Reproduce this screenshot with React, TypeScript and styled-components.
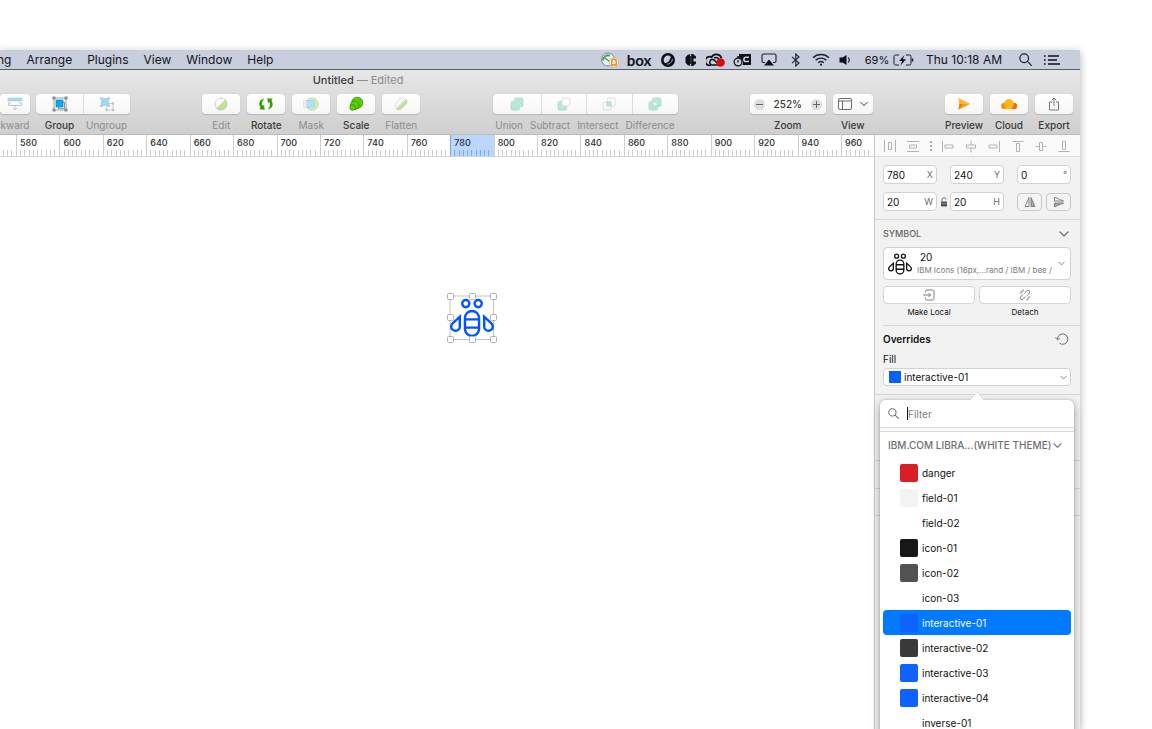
import React from 'react';
import styled, { createGlobalStyle } from 'styled-components';

const GlobalStyle = createGlobalStyle`
  *, *::before, *::after { box-sizing: border-box; }
  body {
    margin: 0;
    background: #fff;
    color: #111;
    font-family: Inter, "Liberation Sans", sans-serif;
    font-size: 10px;
    line-height: 14px;
    overflow: hidden;
  }
  button, input, select { font: inherit; color: inherit; margin: 0; }
  svg { display: block; flex: none; }
`;

const Page = styled.div`
  height: 100vh;
  padding: 50px 72px 0 0;
  overflow: hidden;
`;

const Screen = styled.main`
  display: flex;
  flex-direction: column;
  height: 100%;
  background: #fff;
  box-shadow: 0 2px 8px rgba(0, 0, 0, 0.3);
`;

/* ---------- Menu bar ---------- */

const MenuBar = styled.header`
  display: flex;
  flex: none;
  justify-content: space-between;
  align-items: center;
  height: 20px;
  padding-right: 20px;
  background: #c8cedb;
  border-bottom: 1px solid #566070;
  font-size: 12px;
  color: #10141c;
`;

const Menus = styled.nav`
  display: flex;
  gap: 15px;
  margin-left: -3px;
`;

const MenuLink = styled.a`
  color: inherit;
  text-decoration: none;
`;

const StatusItems = styled.div`
  display: flex;
  align-items: center;
  gap: 4px;
`;

const Status = styled.span<{ $width?: number; $before?: number }>`
  display: flex;
  justify-content: center;
  align-items: center;
  width: ${(p) => (p.$width ? `${p.$width}px` : 'auto')};
  margin-left: ${(p) => p.$before ?? 0}px;
  white-space: nowrap;
`;

const BoxLogo = styled.span`
  font-family: Lato, sans-serif;
  font-size: 15px;
  font-weight: 700;
`;

const Percent = styled.span`
  font-size: 11px;
`;

/* ---------- Window toolbar ---------- */

const WindowHeader = styled.div`
  flex: none;
  background: linear-gradient(#e7e7e7, #cfcfcf);
  border-bottom: 1px solid #bcbcbc;
`;

const Title = styled.h1`
  margin: 0;
  padding: 2px 364px 0 0;
  font-size: 11px;
  font-weight: 500;
  line-height: 16px;
  text-align: center;
  color: #3c3c3c;

  span { font-weight: 400; color: #8c8c8c; }
`;

const Toolbar = styled.div`
  display: flex;
  justify-content: space-between;
  height: 46px;
  padding: 6px 7px 0 0;
`;

const Cluster = styled.div<{ $gap?: number }>`
  display: flex;
  gap: ${(p) => p.$gap ?? 7}px;
`;

const ToolGroup = styled.div`
  display: flex;
  flex-direction: column;
  align-items: center;
  gap: 4px;
`;

const Segments = styled.div`
  display: flex;
  height: 20px;
  background: linear-gradient(#fff, #f6f6f6);
  border-radius: 4px;
  box-shadow: 0 0 1px rgba(0, 0, 0, 0.2), 0 1px 1px rgba(0, 0, 0, 0.14);
`;

const Segment = styled.button<{ $width: number; $dim?: boolean }>`
  display: flex;
  justify-content: center;
  align-items: center;
  gap: 8px;
  width: ${(p) => p.$width}px;
  padding: 0;
  border: 0;
  background: none;

  & + & { border-left: 1px solid #dcdcdc; }
  svg { opacity: ${(p) => (p.$dim ? 0.4 : 1)}; }
`;

const Labels = styled.div<{ $gap: number }>`
  display: flex;
  justify-content: center;
  gap: ${(p) => p.$gap}px;
  width: 0;
  white-space: nowrap;
`;

const Caption = styled.span<{ $dim?: boolean; $width?: number }>`
  flex: none;
  width: ${(p) => (p.$width ? `${p.$width}px` : 'auto')};
  text-align: center;
  font-weight: ${(p) => (p.$dim ? 400 : 500)};
  color: ${(p) => (p.$dim ? '#8c8c8c' : '#3a3a3a')};
`;

const ZoomStepper = styled(Segments)`
  justify-content: space-between;
  align-items: center;
  width: 76px;
  padding: 0 4px;
`;

const Round = styled.button`
  display: grid;
  place-items: center;
  width: 11px;
  height: 11px;
  padding: 0;
  border: 0;
  border-radius: 50%;
  background: #dedede;
`;

/* ---------- Document ---------- */

const Workspace = styled.div`
  display: flex;
  flex: 1;
  min-height: 0;
`;

const Document = styled.section`
  display: flex;
  flex: 1;
  flex-direction: column;
  min-width: 0;
`;

const Ruler = styled.div`
  display: grid;
  grid-template-columns: 16px repeat(19, 1fr) 33px;
  height: 22px;
  overflow: hidden;
  border-bottom: 1px solid #d4d4d4;
`;

const RulerCell = styled.div<{ $active?: boolean; $first?: boolean }>`
  display: flex;
  flex-direction: column;
  justify-content: space-between;
  min-width: 0;
  overflow: hidden;
  border-left: ${(p) => (p.$first ? '0' : `1px solid ${p.$active ? '#6ea6f5' : '#cfcfcf'}`)};
  background: ${(p) => (p.$active ? '#bcd7ff' : 'transparent')};
  color: #2e2e2e;
  font-size: 9px;
  --tick: ${(p) => (p.$active ? '#78aef8' : '#cdcdcd')};

  span { padding: 1px 0 0 3px; line-height: 14px; font-weight: 500; }
`;

const Ticks = styled.div<{ $count: number }>`
  display: grid;
  grid-template-columns: repeat(${(p) => p.$count}, 1fr);
  height: 6px;

  i { border-right: 1px solid var(--tick); }
  i:last-child { border-right: 0; }
`;

const Canvas = styled.div`
  position: relative;
  flex: 1;
`;

const Artwork = styled.svg`
  position: absolute;
  left: 446px;
  top: 135px;
`;

/* ---------- Inspector ---------- */

const Inspector = styled.aside`
  position: relative;
  flex: 0 0 206px;
  border-left: 1px solid #c8c8c8;
  background: #f2f2f2;
`;

const AlignBar = styled.div`
  display: flex;
  justify-content: space-between;
  align-items: center;
  height: 22px;
  padding: 0 9px 0 8px;
  background: #fafafa;
  border-bottom: 1px solid #dadada;
`;

const IconButton = styled.button`
  display: flex;
  padding: 0;
  border: 0;
  background: none;
`;

const Section = styled.section<{ $height?: number }>`
  height: ${(p) => (p.$height ? `${p.$height}px` : 'auto')};
  padding: 0 9px 0 8px;
  border-bottom: 1px solid #d6d6d6;
`;

const Geometry = styled(Section)`
  display: grid;
  grid-template-columns: 1fr 13px 1fr 13px 1fr;
  row-gap: 8px;
  padding-top: 8px;
  padding-bottom: 8px;
  align-items: center;
  justify-items: stretch;

  > svg { justify-self: center; }
`;

const Field = styled.label<{ $column?: number }>`
  display: flex;
  align-items: center;
  grid-column: ${(p) => p.$column};
  height: 19px;
  padding: 0 3px;
  border: 1px solid #d2d2d2;
  border-radius: 4px;
  background: #fff;
  font-size: 9px;
  color: #6c6c6c;

  input {
    flex: 1;
    width: 0;
    min-width: 0;
    padding: 0;
    border: 0;
    outline: 0;
    background: none;
    font-size: 10px;
    color: #111;
  }
`;

const FlipPair = styled.div`
  display: grid;
  grid-template-columns: 1fr 1fr;
  gap: 4px;
`;

const FlipButton = styled.button`
  display: grid;
  place-items: center;
  height: 18px;
  padding: 0;
  border: 1px solid #c9c9c9;
  border-radius: 4px;
  background: #f4f4f4;
`;

const SectionHead = styled.div<{ $height: number }>`
  display: flex;
  justify-content: space-between;
  align-items: center;
  height: ${(p) => p.$height}px;
  padding-right: 2px;
`;

const Heading = styled.h2<{ $caps?: boolean }>`
  margin: 0;
  font-size: ${(p) => (p.$caps ? 9 : 10)}px;
  font-weight: ${(p) => (p.$caps ? 500 : 600)};
  color: ${(p) => (p.$caps ? '#666' : '#111')};
`;

const SymbolPicker = styled.button`
  display: flex;
  align-items: center;
  width: 100%;
  height: 33px;
  padding: 0 5px 0 4px;
  border: 1px solid #d2d2d2;
  border-radius: 4px;
  background: #fff;
  text-align: left;
`;

const SymbolText = styled.span`
  display: grid;
  flex: 1;
  padding-left: 5px;
  line-height: 13px;
  white-space: nowrap;

  strong { padding-left: 3px; font-weight: 400; }
  small { font-size: 8px; line-height: 12px; color: #7a7a7a; }
`;

const SymbolActions = styled.div`
  display: grid;
  grid-template-columns: 1fr 1fr;
  gap: 4px;
  padding: 6px 0 6px;
`;

const Action = styled.label`
  display: grid;
  gap: 1px;
  font-size: 8px;
  text-align: center;
`;

const ActionButton = styled.button`
  display: grid;
  place-items: center;
  height: 18px;
  padding: 0;
  border: 1px solid #d4d4d4;
  border-radius: 4px;
  background: #fff;
`;

const Rule = styled.hr`
  height: 1px;
  margin: 0 -9px 0 0;
  border: 0;
  background: #d6d6d6;
`;

const FillLabel = styled.label`
  display: block;
  padding-bottom: 2px;
`;

const SelectBox = styled.div`
  display: flex;
  align-items: center;
  gap: 3px;
  height: 18px;
  padding: 0 3px 0 5px;
  border: 1px solid #d2d2d2;
  border-radius: 4px;
  background: #fff;

  select {
    flex: 1;
    appearance: none;
    padding: 0;
    border: 0;
    outline: 0;
    background: none;
  }
`;

const FillDot = styled.span`
  width: 12px;
  height: 12px;
  background: #0560ff;
`;

/* ---------- Style picker popover ---------- */

const Popover = styled.div`
  position: absolute;
  top: 265px;
  left: 5px;
  right: 6px;
  bottom: -10px;
  border-radius: 5px 5px 0 0;
  background: #fff;
  box-shadow: 0 0 1px rgba(0, 0, 0, 0.5), 0 3px 10px rgba(0, 0, 0, 0.35);
`;

const Arrow = styled.svg`
  position: absolute;
  top: -9px;
  left: 50%;
  margin-left: -10px;
`;

const Filter = styled.label`
  display: flex;
  align-items: center;
  gap: 8px;
  height: 27px;
  padding: 0 8px;

  input {
    flex: 1;
    width: 0;
    height: 13px;
    padding: 0;
    border: 0;
    border-left: 1px solid #111;
    outline: 0;
    background: none;
  }
  input::placeholder { color: #7d7d7d; opacity: 1; }
`;

const DoubleRule = styled.div`
  height: 5px;
  border: solid #dadada;
  border-width: 1px 0;
  background: #fafafa;
`;

const LibraryHead = styled.button`
  display: flex;
  align-items: center;
  gap: 2px;
  width: 100%;
  height: 26px;
  padding: 0 8px;
  border: 0;
  background: none;
  font-size: 10px;
  font-weight: 500;
  color: #6f6f6f;
  white-space: nowrap;
`;

const Options = styled.div`
  display: grid;
  padding: 2px 3px 0;
`;

const Option = styled.button<{ $selected?: boolean }>`
  display: flex;
  align-items: center;
  gap: 4px;
  height: 25px;
  padding: 0 17px;
  border: 0;
  border-radius: 4px;
  background: ${(p) => (p.$selected ? '#007aff' : 'transparent')};
  color: ${(p) => (p.$selected ? '#fff' : '#111')};
`;

const Swatch = styled.span<{ $color: string }>`
  width: 18px;
  height: 18px;
  border-radius: 2px;
  background: ${(p) => p.$color};
`;

/* ---------- Icons ---------- */

const Chevron = ({ size = 8, color = '#6e6e6e' }: { size?: number; color?: string }) => (
  <svg width={size} height={size} viewBox="0 0 10 10" fill="none" stroke={color} strokeWidth="1.2" strokeLinecap="round" strokeLinejoin="round">
    <path d="M1 3l4 4 4-4" />
  </svg>
);

const BeePaths = () => (
  <>
    <path d="M16,10a6,6,0,0,0-6,6v8a6,6,0,0,0,12,0V16A6,6,0,0,0,16,10Zm-4.25,7.87h8.5v4.25h-8.5ZM16,28.25A4.27,4.27,0,0,1,11.75,24v-.13h8.5V24A4.27,4.27,0,0,1,16,28.25Zm4.25-12.13h-8.5V16a4.25,4.25,0,0,1,8.5,0Z" />
    <path d="M30.66,19.21,24,13v9.1a4,4,0,0,0,8,0A3.83,3.83,0,0,0,30.66,19.21ZM28,24.35a2.25,2.25,0,0,1-2.25-2.25V17l3.72,3.47A2.05,2.05,0,0,1,30.2,22,2.25,2.25,0,0,1,28,24.35Z" />
    <path d="M0,22.1a4,4,0,0,0,8,0V13L1.34,19.21A3.88,3.88,0,0,0,0,22.1Zm2.48-1.56L6.25,17v5.1a2.25,2.25,0,0,1-4.5,0A2.05,2.05,0,0,1,2.48,20.54Z" />
    <path d="M15,5.5A3.5,3.5,0,1,0,11.5,9,3.5,3.5,0,0,0,15,5.5Zm-5.25,0A1.75,1.75,0,1,1,11.5,7.25,1.77,1.77,0,0,1,9.75,5.5Z" />
    <path d="M20.5,2A3.5,3.5,0,1,0,24,5.5,3.5,3.5,0,0,0,20.5,2Zm0,5.25A1.75,1.75,0,1,1,22.25,5.5,1.77,1.77,0,0,1,20.5,7.25Z" />
  </>
);

const SyncIcon = () => (
  <svg width="20" height="16" viewBox="0 0 20 16" fill="none">
    <circle cx="8" cy="7.5" r="6.5" fill="#e9eff0" stroke="#7f8b92" />
    <path d="M3 8.5A5.2 5.2 0 0 1 10 3.6" stroke="#4fa05a" strokeWidth="2" />
    <path d="M5 6l5 4" stroke="#4fa05a" strokeWidth="1.5" />
    <circle cx="14" cy="10.5" r="4.8" fill="#f5efe2" stroke="#dcae6a" strokeWidth=".8" />
    <path d="M11.8 13V9.4a2.2 2.2 0 0 1 4.4 0V13z" stroke="#e08a1e" strokeWidth="1.3" />
  </svg>
);

const OrbIcon = () => (
  <svg width="14" height="14" viewBox="0 0 14 14" fill="none">
    <circle cx="7" cy="7" r="5.700" stroke="#0d1016" strokeWidth="2.600" />
    <path d="M2.500 10.500C6.500 10.500 9.500 7.500 10 2.500L12 5.500 10.500 11 6 12.500z" fill="#0d1016" />
    <path d="M6 11.300c3-.3 5-2.300 5.500-5.200" stroke="#aab1bf" strokeWidth=".9" />
  </svg>
);

const GaugeIcon = () => (
  <svg width="12" height="12" viewBox="0 0 12 12">
    <path d="M5.200 0v12L2.500 11 .5 8.500v-5L2.500 1z" fill="#0d1016" />
    <path d="M6.200 0H8l3 2.500v2H8.500v3H11v2L8 12H6.200z" fill="#0d1016" />
    <path d="M5.700 2v8" stroke="#0d1016" strokeWidth="1" />
  </svg>
);

const CreativeCloudIcon = () => (
  <svg width="20" height="14" viewBox="0 0 20 14" fill="none">
    <path d="M5 12A4.300 4.300 0 1 1 5.500 4.200 5.500 5.500 0 0 1 15.500 5" stroke="#0d1016" strokeWidth="1.800" />
    <path d="M12 12H6.500A2.800 2.800 0 1 1 8.700 7.500L11 10M8 5a4 4 0 0 1 5 1" stroke="#0d1016" strokeWidth="1.500" />
    <circle cx="14.500" cy="9.500" r="4.300" fill="#d30b12" />
  </svg>
);

const CaptureIcon = () => (
  <svg width="18" height="14" viewBox="0 0 18 14" fill="none">
    <path d="M6 1h12v11h-8.500A5 5 0 0 0 6 5z" fill="#0d1016" />
    <path d="M16 4.300h-3a2.100 2.100 0 0 0 0 4.200h3" stroke="#c8cedb" strokeWidth="1.600" />
    <circle cx="5" cy="9" r="3.900" fill="#c8cedb" stroke="#0d1016" strokeWidth="1.200" />
    <path d="M5 7v2.500" stroke="#0d1016" strokeWidth="1.200" />
    <path d="M4 4h3" stroke="#0d1016" strokeWidth="1.400" />
  </svg>
);

const AirplayIcon = () => (
  <svg width="16" height="13" viewBox="0 0 16 13" fill="none">
    <path d="M4 9.500H2.500A1.500 1.500 0 0 1 1 8V2.500A1.500 1.500 0 0 1 2.500 1h11A1.500 1.500 0 0 1 15 2.500V8a1.500 1.500 0 0 1-1.500 1.500H12" stroke="#1b212c" strokeWidth="1.100" />
    <path d="M8 6.500l5 6H3z" fill="#0d1016" />
  </svg>
);

const BluetoothIcon = () => (
  <svg width="10" height="14" viewBox="0 0 10 14" fill="none" stroke="#1b212c" strokeWidth="1.100">
    <path d="M1 3.800l7 6.200-3.200 3V1L8 4 1 10.200" />
  </svg>
);

const WifiIcon = () => (
  <svg width="18" height="13" viewBox="0 0 18 13" fill="none" stroke="#1b212c" strokeWidth="1.400">
    <path d="M1 4.800a11.500 11.500 0 0 1 16 0M3.600 7.300a7.800 7.800 0 0 1 10.800 0M6.200 9.800a4.200 4.200 0 0 1 5.600 0" />
    <circle cx="9" cy="11.700" r="1.100" fill="#1b212c" stroke="none" />
  </svg>
);

const SpeakerIcon = () => (
  <svg width="14" height="12" viewBox="0 0 14 12" fill="none">
    <path d="M1.500 3.500h3L8.500 1v10L4.500 8.500h-3z" fill="#0d1016" />
    <path d="M10.300 3.500a4 4 0 0 1 0 5" stroke="#1b212c" strokeWidth="1.100" />
  </svg>
);

const BatteryIcon = () => (
  <svg width="21" height="12" viewBox="0 0 21 12" fill="none">
    <path d="M6 1H2.500A1.500 1.500 0 0 0 1 2.500v7A1.500 1.500 0 0 0 2.500 11H6M13 1h3.500A1.500 1.500 0 0 1 18 2.500v7a1.500 1.500 0 0 1-1.500 1.500H13" stroke="#1b212c" />
    <path d="M19.500 4.500v3" stroke="#1b212c" strokeWidth="1.600" />
    <path d="M11.500 1L6 7h3.200L7.500 11.500 13 5.200H9.700z" fill="#0d1016" />
  </svg>
);

const SearchIcon = ({ size, color }: { size: number; color: string }) => (
  <svg width={size} height={size} viewBox="0 0 12 12" fill="none" stroke={color} strokeWidth="1.100" strokeLinecap="round">
    <circle cx="4.800" cy="4.800" r="4" />
    <path d="M7.800 7.800l3.600 3.600" />
  </svg>
);

const ListIcon = () => (
  <svg width="16" height="10" viewBox="0 0 16 10" stroke="#0d1016" strokeWidth="1.600">
    <path d="M0 1h1.600M4 1h11M0 5h1.600M4 5h9M0 9h1.600M4 9h12" />
  </svg>
);

const BackwardIcon = () => (
  <svg width="16" height="16" viewBox="0 0 16 16" fill="none" stroke="#7a7a7a">
    <rect x="1" y="2" width="14" height="3" fill="#25a9ef" stroke="#1b8fd0" strokeWidth=".6" />
    <path d="M4 7H1.500v2.500h13V7H12" />
    <path d="M8 9.500V14M5.800 11.800L8 14l2.200-2.200" />
  </svg>
);

const GroupIcon = () => (
  <svg width="16" height="16" viewBox="0 0 16 16" fill="none">
    <path d="M2 2h12v12H2z" stroke="#8a8a8a" strokeWidth=".8" />
    <g fill="#8a8a8a">
      <rect x=".5" y=".5" width="3" height="3" rx=".6" />
      <rect x="12.500" y=".5" width="3" height="3" rx=".6" />
      <rect x=".5" y="12.500" width="3" height="3" rx=".6" />
      <rect x="12.500" y="12.500" width="3" height="3" rx=".6" />
    </g>
    <rect x="6.500" y="6.500" width="6" height="6" fill="#fff" stroke="#8a8a8a" strokeWidth=".9" />
    <rect x="4" y="4" width="7" height="7" fill="#12a7f5" stroke="#0b80c9" strokeWidth=".7" />
  </svg>
);

const UngroupIcon = () => (
  <svg width="16" height="16" viewBox="0 0 16 16" fill="none">
    <path d="M8 7.500h6v6.500H7.500V10" stroke="#777" strokeWidth=".8" />
    <g fill="#777">
      <rect x="12.800" y="6.200" width="2.400" height="2.400" />
      <rect x="12.800" y="12.800" width="2.400" height="2.400" />
      <rect x="6.300" y="12.800" width="2.400" height="2.400" />
    </g>
    <rect x="2.500" y="2.500" width="7" height="7" fill="#12a7f5" stroke="#0b80c9" strokeWidth=".7" />
    <g fill="#777">
      <rect x="1.200" y="1.200" width="2.400" height="2.400" />
      <rect x="8.600" y="1.200" width="2.400" height="2.400" />
      <rect x="1.200" y="8.600" width="2.400" height="2.400" />
      <rect x="8.600" y="8.600" width="2.400" height="2.400" />
    </g>
  </svg>
);

const EditIcon = () => (
  <svg width="16" height="16" viewBox="0 0 16 16" fill="none">
    <circle cx="8" cy="8" r="6" stroke="#888" strokeWidth=".9" />
    <path d="M12.600 4.200A6 6 0 0 1 4 12.500z" fill="#63c70a" stroke="#4f9f10" strokeWidth=".7" />
    <path d="M13.500 2.500l-11 11" stroke="#999" strokeWidth=".7" />
  </svg>
);

const RotateIcon = () => (
  <svg width="16" height="16" viewBox="0 0 16 16" fill="#2fa000">
    <path d="M6.200 2.500C1.500 3.500 0 8 2.600 11.600L1.300 13.300l5.400.5L6 8.800 4.700 10.300C3.500 7.500 3.900 5 6.200 2.500z" />
    <path d="M9.800 13.500c4.700-1 6.200-5.500 3.600-9.100l1.300-1.700-5.400-.5.700 5 1.300-1.500c1.200 2.800.8 5.300-1.500 7.800z" />
  </svg>
);

const MaskIcon = () => (
  <svg width="16" height="16" viewBox="0 0 16 16">
    <circle cx="9" cy="8" r="6.200" fill="#9bdc58" stroke="#59a81f" strokeWidth=".8" />
    <rect x=".5" y="4.500" width="5" height="7" fill="#ddd" stroke="#aaa" strokeWidth=".5" />
    <rect x="4" y="4.500" width="7.500" height="7" fill="#4db8f5" stroke="#2b8fce" strokeWidth=".8" />
  </svg>
);

const ScaleIcon = () => (
  <svg width="16" height="16" viewBox="0 0 16 16" fill="#5bd000" stroke="#2f8c00" strokeWidth=".8">
    <circle cx="9.200" cy="6.800" r="5.600" />
    <circle cx="6.800" cy="9.200" r="4.300" />
    <circle cx="4.600" cy="11.400" r="2.800" />
  </svg>
);

const FlattenIcon = () => (
  <svg width="16" height="16" viewBox="0 0 16 16" fill="none">
    <path d="M3.500 12A3.500 3.500 0 0 1 2.800 7.200C4 6.500 4.500 6 5.200 4.500a3.800 3.800 0 0 1 6.300-1.300" stroke="#999" strokeWidth=".8" />
    <path d="M13.300 3.700c1 1.300.9 3-.1 4.200l-4.700 4.600c-1.500 1.300-3.300 1.500-4.800.8z" fill="#63c70a" stroke="#4f9f10" strokeWidth=".7" />
    <path d="M12.500 2.500l-9.500 10.500" stroke="#999" strokeWidth=".8" />
  </svg>
);

type BoolKind = 'union' | 'subtract' | 'intersect' | 'difference';

const BooleanIcon = ({ kind }: { kind: BoolKind }) => {
  const green = '#4fd0ac';
  const line = '#38ab8a';
  const grey = '#9a9a9a';
  const both = kind === 'union' || kind === 'difference';
  return (
    <svg width="16" height="16" viewBox="0 0 16 16" strokeWidth=".8">
      {both && (
        <path d="M7 2h5.500A1.500 1.500 0 0 1 14 3.500V9a1.500 1.500 0 0 1-1.500 1.500h-2v2A1.500 1.500 0 0 1 9 14H3.500A1.500 1.500 0 0 1 2 12.500V7a1.500 1.500 0 0 1 1.500-1.500h2v-2A1.500 1.500 0 0 1 7 2z" fill={green} stroke={line} />
      )}
      {kind === 'difference' && <rect x="6" y="6" width="4" height="4" rx="1" fill="#fff" stroke={line} />}
      {kind === 'subtract' && (
        <>
          <rect x="2" y="5.500" width="8.500" height="8.500" rx="1.500" fill={green} stroke={line} />
          <rect x="6" y="2" width="8" height="8" rx="1.500" fill="#fff" stroke={grey} />
        </>
      )}
      {kind === 'intersect' && (
        <>
          <rect x="2" y="6" width="8" height="8" rx="1.500" fill="none" stroke={grey} />
          <rect x="6" y="2" width="8" height="8" rx="1.500" fill="none" stroke={grey} />
          <rect x="6" y="6" width="4" height="4" fill={green} stroke={line} />
        </>
      )}
    </svg>
  );
};

const ViewIcon = () => (
  <svg width="14" height="12" viewBox="0 0 14 12" fill="none" stroke="#6c6c6c">
    <rect x=".5" y=".5" width="13" height="11" rx="1.500" />
    <path d="M.5 3h13M4.500 3v8.500" />
  </svg>
);

const PreviewIcon = () => (
  <svg width="14" height="14" viewBox="0 0 14 14">
    <path d="M1.500 1.200L13 7 1.500 12.800 2.500 7z" fill="#ff9d0a" />
    <path d="M1.500 1.200L13 7H2.500z" fill="#ffb92b" />
    <path d="M1.500 12.800L2.500 7H6z" fill="#ee7a00" />
  </svg>
);

const CloudIcon = () => (
  <svg width="18" height="14" viewBox="0 0 18 14">
    <circle cx="4.500" cy="9" r="3.300" fill="#f58a12" />
    <circle cx="13.800" cy="9" r="3.300" fill="#ee6a10" />
    <circle cx="9" cy="6.800" r="4.800" fill="#fdb913" />
    <path d="M5 8h8.500l-2 4.300H5z" fill="#fdb913" />
  </svg>
);

const ExportIcon = () => (
  <svg width="12" height="14" viewBox="0 0 12 14" fill="none" stroke="#777">
    <path d="M4 5H1.500v8h9V5H8M6 9V1M3.700 3.200L6 1l2.300 2.200" />
  </svg>
);

const alignIcons: { name: string; d: string }[] = [
  { name: 'Distribute horizontally', d: 'M1.5 1v12M12.5 1v12M5.500 3.500h3v7h-3z' },
  { name: 'Distribute vertically', d: 'M1 2.500h12M1 12.500h12M3.500 6h7v3h-7z' },
  { name: 'Align left', d: 'M1.500 2v11M4 6h8v3H4z' },
  { name: 'Align centre', d: 'M7 1.500v4.500M7 9v4.500M2.500 6h9v3h-9z' },
  { name: 'Align right', d: 'M12.500 2v11M2 6h8v3H2z' },
  { name: 'Align top', d: 'M1.500 2.500h11M5.500 4.500h3v8h-3z' },
  { name: 'Align middle', d: 'M1.500 7.500h4M8.500 7.500h4M5.500 3.500h3v8h-3z' },
  { name: 'Align bottom', d: 'M1.500 12.500h11M5.500 2.500h3v8h-3z' },
];

const AlignIcon = ({ d }: { d: string }) => (
  <svg width="14" height="14" viewBox="0 0 14 14" fill="none" stroke="#b2b2b2">
    <path d={d} />
  </svg>
);

const LockIcon = () => (
  <svg width="8" height="10" viewBox="0 0 8 10" fill="none">
    <rect x="1" y="4.500" width="6" height="5" fill="#555" />
    <path d="M2 4.500V3a2 2 0 0 1 4-.5" stroke="#777" />
    <path d="M1 6.500h6" stroke="#999" strokeWidth=".6" />
  </svg>
);

const FlipIcon = ({ vertical }: { vertical?: boolean }) => (
  <svg width="12" height="12" viewBox="0 0 12 12" fill="none" stroke="#777" strokeWidth=".9">
    <g transform={vertical ? 'rotate(90 6 6)' : undefined}>
      <path d="M5 1.500V10.500H1.200z" />
      <path d="M7 1.500V10.500h3.800z" fill="#aaa" />
    </g>
  </svg>
);

const MakeLocalIcon = () => (
  <svg width="12" height="12" viewBox="0 0 12 12" fill="none" stroke="#6f6f6f" strokeWidth=".9">
    <path d="M2.500 3.500v-1A1.500 1.500 0 0 1 4 1h5.500A1.500 1.500 0 0 1 11 2.500v7A1.500 1.500 0 0 1 9.500 11H4a1.500 1.500 0 0 1-1.500-1.500v-1M0 6h7.500M5.500 4l2 2-2 2" />
  </svg>
);

const DetachIcon = () => (
  <svg width="12" height="12" viewBox="0 0 12 12" fill="none" stroke="#6f6f6f" strokeWidth=".9">
    <path d="M5.500 4.500l2.300-2.700a1.600 1.600 0 0 1 2.500 2.300L8 6.700M6.500 7.500l-2.300 2.700a1.600 1.600 0 0 1-2.500-2.300L4 5.300M2 1.500l1.500 1.800M.8 4h2M4 .5v2M10 10.500L8.500 8.700M11.200 8h-2M8 11.500v-2" />
  </svg>
);

const ResetIcon = () => (
  <svg width="14" height="12" viewBox="0 0 14 12" fill="none" stroke="#6f6f6f">
    <path d="M2.500 6.500a5.200 5.200 0 1 1 2 3.700M.4 4.500l2.100 2.300 2.300-1.800" />
  </svg>
);

/* ---------- Data ---------- */

const rulerStops = Array.from({ length: 20 }, (_, i) => 580 + i * 20);

const handles = [
  [4, 4], [26, 4], [47, 4],
  [4, 25], [47, 25],
  [4, 47], [26, 47], [47, 47],
];

const colours = [
  { name: 'danger', color: '#da1e28' },
  { name: 'field-01', color: '#f3f3f3' },
  { name: 'field-02', color: '#ffffff' },
  { name: 'icon-01', color: '#171717' },
  { name: 'icon-02', color: '#525252' },
  { name: 'icon-03', color: '#ffffff' },
  { name: 'interactive-01', color: '#0f62fe' },
  { name: 'interactive-02', color: '#393939' },
  { name: 'interactive-03', color: '#0f62fe' },
  { name: 'interactive-04', color: '#0f62fe' },
  { name: 'inverse-01', color: '#ffffff' },
];

type ToolDef = { label: string; width: number; icon: React.ReactNode; dim?: boolean };

/* Captions sit in columns as wide as their segments, unless a gap asks for them to be packed. */
const Tool = ({ items, gap }: { items: ToolDef[]; gap?: number }) => (
  <ToolGroup>
    <Segments>
      {items.map((t) => (
        <Segment key={t.label} type="button" aria-label={t.label} $width={t.width} $dim={t.dim}>
          {t.icon}
        </Segment>
      ))}
    </Segments>
    <Labels $gap={gap ?? 0}>
      {items.map((t) => (
        <Caption key={t.label} $dim={t.dim} $width={gap ? undefined : t.width}>{t.label}</Caption>
      ))}
    </Labels>
  </ToolGroup>
);

export default function App() {
  return (
    <Page>
      <GlobalStyle />
      <Screen>
        <MenuBar>
          <Menus>
            <MenuLink href="#">ng</MenuLink>
            <MenuLink href="#">Arrange</MenuLink>
            <MenuLink href="#">Plugins</MenuLink>
            <MenuLink href="#">View</MenuLink>
            <MenuLink href="#">Window</MenuLink>
            <MenuLink href="#">Help</MenuLink>
          </Menus>
          <StatusItems>
            <Status $width={22}><SyncIcon /></Status>
            <Status $width={28}><BoxLogo>box</BoxLogo></Status>
            <Status $width={22}><OrbIcon /></Status>
            <Status $width={16}><GaugeIcon /></Status>
            <Status $width={26}><CreativeCloudIcon /></Status>
            <Status $width={18}><CaptureIcon /></Status>
            <Status $width={28}><AirplayIcon /></Status>
            <Status $width={18}><BluetoothIcon /></Status>
            <Status $width={24}><WifiIcon /></Status>
            <Status $width={16}><SpeakerIcon /></Status>
            <Status $width={24} $before={8}><Percent>69%</Percent></Status>
            <Status><BatteryIcon /></Status>
            <Status $width={76} $before={8}>Thu 10:18 AM</Status>
            <Status $width={14} $before={12}><SearchIcon size={13} color="#1b212c" /></Status>
            <Status $before={8}><ListIcon /></Status>
          </StatusItems>
        </MenuBar>

        <WindowHeader>
          <Title>Untitled <span>— Edited</span></Title>
          <Toolbar>
            <Cluster $gap={6}>
              <Tool items={[{ label: 'kward', width: 30, icon: <BackwardIcon />, dim: true }]} />
              <Tool
                items={[
                  { label: 'Group', width: 47, icon: <GroupIcon /> },
                  { label: 'Ungroup', width: 47, icon: <UngroupIcon />, dim: true },
                ]}
              />
            </Cluster>
            <Cluster>
              <Tool items={[{ label: 'Edit', width: 38, icon: <EditIcon />, dim: true }]} />
              <Tool items={[{ label: 'Rotate', width: 38, icon: <RotateIcon /> }]} />
              <Tool items={[{ label: 'Mask', width: 38, icon: <MaskIcon />, dim: true }]} />
              <Tool items={[{ label: 'Scale', width: 38, icon: <ScaleIcon /> }]} />
              <Tool items={[{ label: 'Flatten', width: 38, icon: <FlattenIcon />, dim: true }]} />
            </Cluster>
            <Tool
              gap={7}
              items={[
                { label: 'Union', width: 48, icon: <BooleanIcon kind="union" />, dim: true },
                { label: 'Subtract', width: 45, icon: <BooleanIcon kind="subtract" />, dim: true },
                { label: 'Intersect', width: 46, icon: <BooleanIcon kind="intersect" />, dim: true },
                { label: 'Difference', width: 46, icon: <BooleanIcon kind="difference" />, dim: true },
              ]}
            />
            <Cluster>
              <ToolGroup>
                <ZoomStepper>
                  <Round type="button" aria-label="Zoom out">
                    <svg width="7" height="7" viewBox="0 0 7 7" stroke="#666"><path d="M0 3.500h7" /></svg>
                  </Round>
                  <Caption>252%</Caption>
                  <Round type="button" aria-label="Zoom in">
                    <svg width="7" height="7" viewBox="0 0 7 7" stroke="#666"><path d="M0 3.500h7M3.500 0v7" /></svg>
                  </Round>
                </ZoomStepper>
                <Labels $gap={0}><Caption>Zoom</Caption></Labels>
              </ToolGroup>
              <Tool items={[{ label: 'View', width: 40, icon: <><ViewIcon /><Chevron color="#333" /></> }]} />
            </Cluster>
            <Cluster>
              <Tool items={[{ label: 'Preview', width: 38, icon: <PreviewIcon /> }]} />
              <Tool items={[{ label: 'Cloud', width: 38, icon: <CloudIcon /> }]} />
              <Tool items={[{ label: 'Export', width: 38, icon: <ExportIcon /> }]} />
            </Cluster>
          </Toolbar>
        </WindowHeader>

        <Workspace>
          <Document>
            <Ruler>
              <RulerCell $first>
                <span>&nbsp;</span>
                <Ticks $count={4}>{Array.from({ length: 4 }, (_, i) => <i key={i} />)}</Ticks>
              </RulerCell>
              {rulerStops.map((n) => {
                const count = n === 960 ? 7 : 10;
                return (
                  <RulerCell key={n} $active={n === 780}>
                    <span>{n}</span>
                    <Ticks $count={count}>{Array.from({ length: count }, (_, i) => <i key={i} />)}</Ticks>
                  </RulerCell>
                );
              })}
            </Ruler>
            <Canvas>
              <Artwork width="52" height="52" viewBox="0 0 52 52">
                <path d="M4 4h43.500v43.500H4z" fill="none" stroke="#c4c4c4" />
                <svg x="4" y="4" width="44" height="44" viewBox="0 0 32 32" fill="#0055ff">
                  <BeePaths />
                </svg>
                {handles.map(([x, y]) => (
                  <rect key={`${x}-${y}`} x={x - 2.5} y={y - 2.5} width="6" height="6" rx="1" fill="#fff" stroke="#b0b0b0" />
                ))}
              </Artwork>
            </Canvas>
          </Document>

          <Inspector>
            <AlignBar>
              {alignIcons.map((a, i) => (
                <React.Fragment key={a.name}>
                  {i === 2 && (
                    <svg width="2" height="10" viewBox="0 0 2 10" fill="#a8a8a8">
                      <path d="M0 0h2v2H0zM0 4h2v2H0zM0 8h2v2H0z" />
                    </svg>
                  )}
                  <IconButton type="button" aria-label={a.name}><AlignIcon d={a.d} /></IconButton>
                </React.Fragment>
              ))}
            </AlignBar>

            <Geometry>
              <Field $column={1}><input defaultValue="780" />X</Field>
              <Field $column={3}><input defaultValue="240" />Y</Field>
              <Field $column={5}><input defaultValue="0" />°</Field>
              <Field><input defaultValue="20" />W</Field>
              <LockIcon />
              <Field><input defaultValue="20" />H</Field>
              <span />
              <FlipPair>
                <FlipButton type="button" aria-label="Flip horizontally"><FlipIcon /></FlipButton>
                <FlipButton type="button" aria-label="Flip vertically"><FlipIcon vertical /></FlipButton>
              </FlipPair>
            </Geometry>

            <Section $height={175}>
              <SectionHead $height={27}>
                <Heading $caps>SYMBOL</Heading>
                <IconButton type="button" aria-label="Collapse symbol"><Chevron size={10} /></IconButton>
              </SectionHead>
              <SymbolPicker type="button">
                <svg width="24" height="24" viewBox="0 0 32 32" fill="#111"><BeePaths /></svg>
                <SymbolText>
                  <strong>20</strong>
                  <small>IBM Icons (16px,...rand / IBM / bee /</small>
                </SymbolText>
                <Chevron size={7} />
              </SymbolPicker>
              <SymbolActions>
                <Action>
                  <ActionButton type="button"><MakeLocalIcon /></ActionButton>
                  Make Local
                </Action>
                <Action>
                  <ActionButton type="button"><DetachIcon /></ActionButton>
                  Detach
                </Action>
              </SymbolActions>
              <Rule />
              <SectionHead $height={26}>
                <Heading>Overrides</Heading>
                <IconButton type="button" aria-label="Reset overrides"><ResetIcon /></IconButton>
              </SectionHead>
              <FillLabel htmlFor="fill">Fill</FillLabel>
              <SelectBox>
                <FillDot />
                <select id="fill" defaultValue="interactive-01">
                  {colours.map((c) => <option key={c.name}>{c.name}</option>)}
                </select>
                <Chevron size={7} />
              </SelectBox>
            </Section>
            <Section $height={66} />
            <Section $height={28} />
            <Section $height={27} />

            <Popover>
              <Arrow width="20" height="10" viewBox="0 0 20 10">
                <path d="M0 10c2 0 3-1 4-2l5-6q1-1 2 0l5 6c1 1 2 2 4 2z" fill="#fff" stroke="#cfcfcf" strokeWidth=".6" />
                <path d="M0 9.500h20" stroke="#fff" />
              </Arrow>
              <Filter>
                <SearchIcon size={11} color="#6c6c6c" />
                <input aria-label="Filter" placeholder="Filter" />
              </Filter>
              <DoubleRule />
              <LibraryHead type="button">
                IBM.COM LIBRA...(WHITE THEME)
                <Chevron size={9} />
              </LibraryHead>
              <Options role="listbox" aria-label="Layer styles">
                {colours.map((c) => {
                  const selected = c.name === 'interactive-01';
                  return (
                    <Option key={c.name} type="button" role="option" aria-selected={selected} $selected={selected}>
                      <Swatch $color={c.color} />
                      {c.name}
                    </Option>
                  );
                })}
              </Options>
            </Popover>
          </Inspector>
        </Workspace>
      </Screen>
    </Page>
  );
}
